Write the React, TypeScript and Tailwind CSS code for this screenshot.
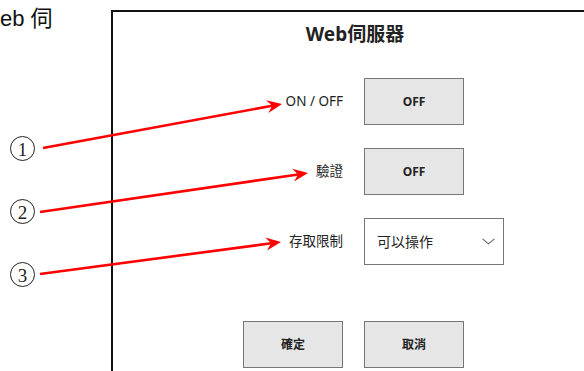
const ui = { fontFamily: '"Noto Sans", "Noto Sans CJK TC", sans-serif' };

// arrows: [startX, startY, tipX, tipY]
const arrows = [
  [43, 148, 282, 104],
  [40, 212, 308, 173],
  [40, 274, 281, 242],
];

function Arrow({ a }: { a: number[] }) {
  const [x1, y1, x2, y2] = a;
  const dx = x2 - x1;
  const dy = y2 - y1;
  const len = Math.hypot(dx, dy);
  const ux = dx / len;
  const uy = dy / len;
  const nx = -uy;
  const ny = ux;
  const bx = x2 - 15 * ux;
  const by = y2 - 15 * uy;
  const kx = x2 - 10 * ux;
  const ky = y2 - 10 * uy;
  const pts = [
    [x2, y2],
    [bx + 6.5 * nx, by + 6.5 * ny],
    [kx, ky],
    [bx - 6.5 * nx, by - 6.5 * ny],
  ]
    .map((p) => p.join(","))
    .join(" ");
  return (
    <g>
      <line x1={x1} y1={y1} x2={kx} y2={ky} stroke="#ff0000" strokeWidth={2.6} />
      <polygon points={pts} fill="#ff0000" />
    </g>
  );
}

function Circled({ n }: { n: string }) {
  return (
    <span
      className="flex h-[25px] w-[25px] items-center justify-center rounded-full border border-[#222] text-[19px] leading-none text-[#222]"
      style={{ fontFamily: '"Liberation Serif", serif' }}
    >
      <span className="mt-[1px]">{n}</span>
    </span>
  );
}

function GrayButton({ label }: { label: string }) {
  return (
    <div className="flex h-[47px] w-[100px] items-center justify-center border border-[#767676] bg-[#e6e6e6] text-[12px] font-bold text-[#222]">
      {label}
    </div>
  );
}

export default function App() {
  return (
    <div className="relative flex h-[371px] w-[584px] overflow-hidden bg-white" style={ui}>
      <div className="flex w-[111px] shrink-0 flex-col">
        <p
          className="mt-[7px] whitespace-nowrap text-[22px] leading-[24px] text-[#111]"
          style={{ fontFamily: '"Liberation Sans", "Noto Sans CJK TC", sans-serif' }}
        >
          eb 伺
        </p>
        <div className="ml-[10px] mt-[105px] flex flex-col gap-[38px]">
          <Circled n="1" />
          <Circled n="2" />
          <Circled n="3" />
        </div>
      </div>

      <div className="mt-[10px] h-[400px] w-[486px] shrink-0 border-l-2 border-t-2 border-[#111] pt-[10px]">
        <h1 className="h-[24px] text-center text-[19px] font-bold leading-[24px] text-[#222]">
          Web伺服器
        </h1>
        <div className="mt-[32px] grid grid-cols-[230px_auto] items-center gap-x-[21px] gap-y-[23px] text-[13.5px] text-[#222]">
          <span className="text-right">ON / OFF</span>
          <GrayButton label="OFF" />
          <span className="text-right">驗證</span>
          <GrayButton label="OFF" />
          <span className="text-right">存取限制</span>
          <div className="flex h-[47px] w-[140px] items-center justify-between border border-[#767676] bg-white pl-[12px] pr-[8px] text-[14px] text-[#222]">
            <span>可以操作</span>
            <svg width="13" height="7" viewBox="0 0 13 7" fill="none">
              <polyline points="0.5,0.8 6.5,5.8 12.5,0.8" stroke="#666" strokeWidth="1.1" />
            </svg>
          </div>
          <div className="mt-[33px] flex justify-end">
            <GrayButton label="確定" />
          </div>
          <div className="mt-[33px]">
            <GrayButton label="取消" />
          </div>
        </div>
      </div>

      <svg className="pointer-events-none absolute left-0 top-0" width={584} height={371}>
        {arrows.map((a, i) => (
          <Arrow key={i} a={a} />
        ))}
      </svg>
    </div>
  );
}
